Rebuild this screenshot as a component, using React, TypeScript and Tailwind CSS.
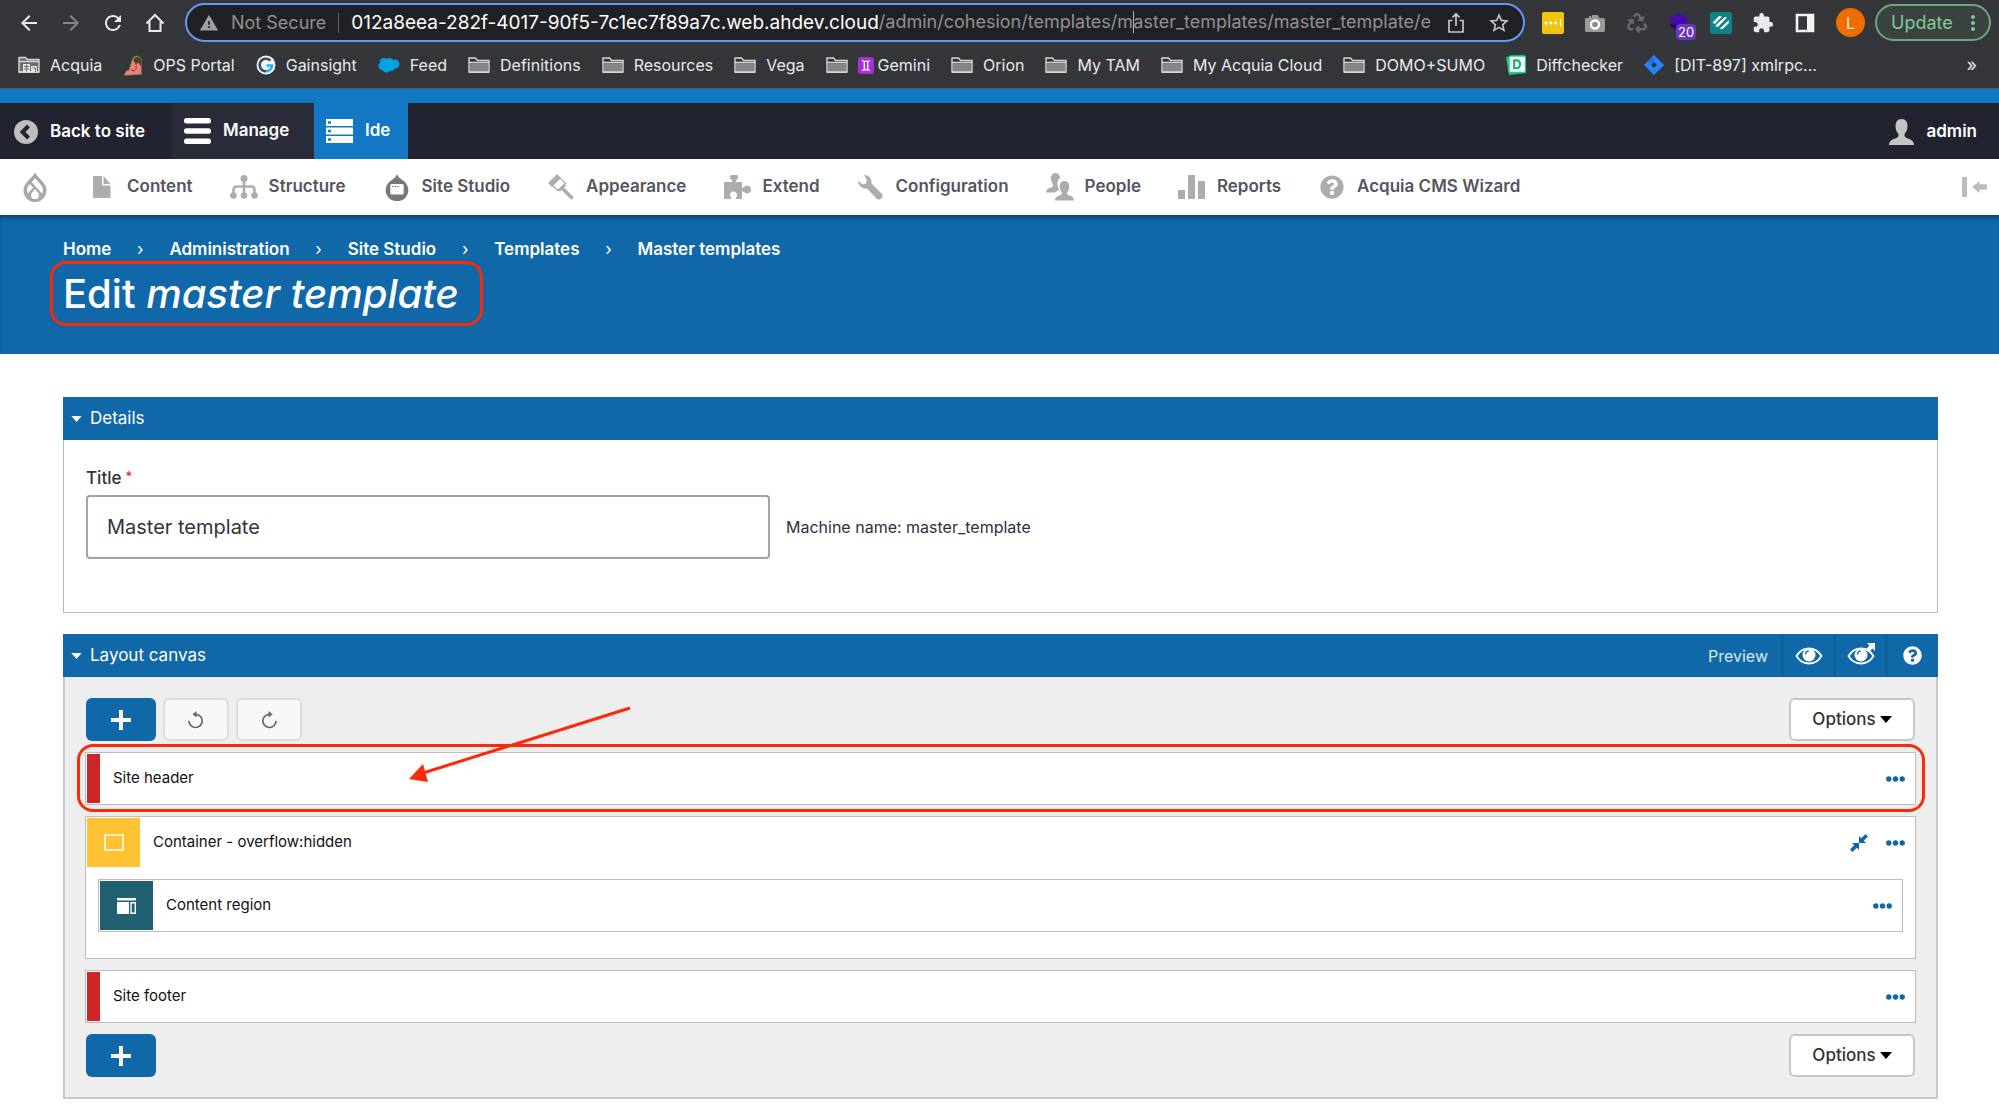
import type { ReactNode } from "react";
import { MdArrowBack, MdArrowForward, MdExtension, MdMoreVert, MdRefresh, MdStarBorder, MdWarning } from "react-icons/md";
import { FaQuestionCircle, FaRecycle } from "react-icons/fa";
import { SiDrupal } from "react-icons/si";

/* ---------- browser icons ---------- */

const HomeIcon = () => (
  <svg viewBox="0 0 20 20" className="h-5 w-5" fill="none" stroke="currentColor" strokeWidth="2">
    <path d="M1.5 10.5 10 2l8.500 8.500M4.500 8.500V18h11V8.500" />
  </svg>
);

const ShareIcon = () => (
  <svg viewBox="0 0 18 22" className="h-[22px] w-[18px] shrink-0" fill="none" stroke="currentColor" strokeWidth="1.700">
    <path d="M5.500 8.500H2v11.500h14V8.500h-3.500M9 14V2M5.500 5.300 9 1.800l3.500 3.500" />
  </svg>
);

const FolderIcon = () => (
  <svg viewBox="0 0 22 18" className="h-[18px] w-[22px] shrink-0">
    <path d="M1 16V2h6.500l2 2.500H21V16z" fill="#35363a" stroke="#d6d7d9" strokeWidth="1.400" />
    <path d="M2 7.500h18V15H2z" fill="#85868a" />
    <path d="M1 6.500h20M1 16.200h20" stroke="#d6d7d9" strokeWidth="1.600" />
  </svg>
);

const BuildingFolderIcon = () => (
  <svg viewBox="0 0 22 18" className="h-[18px] w-[22px] shrink-0">
    <path d="M1 16V1.500h6.500l2 2H21V16z" fill="#6b6c70" stroke="#d6d7d9" strokeWidth="1.400" />
    <path d="M1 5.500h20M1 16.200h20" stroke="#d6d7d9" strokeWidth="1.600" />
    <path d="M5 8h7v8H5zM13 10h6v6h-6z" fill="#e3e4e6" />
    <path d="M6 10.500h5M6 13h5M8.500 8.500v7M14.500 12h3v4" stroke="#6b6c70" fill="none" />
  </svg>
);

const OpsIcon = () => (
  <svg viewBox="0 0 20 21" className="h-[21px] w-5 shrink-0">
    <path d="M1 20.500 3 16l3-1 3-10c1-4 5-5 7.500-3 3 2 2.500 6 2 8v9.500z" fill="#f0817a" stroke="#5c6b2e" strokeWidth="1" strokeDasharray="2 1" />
    <path d="M10 5c1-3 5-4 7-2s2 6 1 8c-1 0-1-3-3-3s-1 3-2 2-1-3-3-5z" fill="#3f4a22" />
    <path d="M8 15c3 2 6 0 5-4" stroke="#7b3b34" fill="none" />
  </svg>
);

const GainsightIcon = () => (
  <svg viewBox="0 0 20 20" className="h-5 w-5 shrink-0">
    <circle cx="10" cy="10" r="9.500" fill="#f4f6f8" />
    <path d="M14.500 5.600A6.300 6.300 0 1 0 10 16.300" fill="none" stroke="#3b5165" strokeWidth="2.600" />
    <path d="M10 16.300a6 6 0 0 0 6-5.800h-5.500" fill="none" stroke="#1fb6ee" strokeWidth="2.600" />
  </svg>
);

const CloudIcon = () => (
  <svg viewBox="0 0 22 16" className="h-4 w-[22px] shrink-0" fill="#00a1e0">
    <circle cx="6" cy="5" r="4" />
    <circle cx="11.500" cy="4.800" r="3.800" />
    <circle cx="17" cy="7" r="4.500" />
    <circle cx="4.500" cy="9" r="4" />
    <circle cx="8.500" cy="11.500" r="4" />
    <circle cx="13" cy="10" r="4" />
  </svg>
);

const GeminiIcon = () => (
  <svg viewBox="0 0 16 17" className="h-[17px] w-4 shrink-0">
    <rect width="16" height="17" rx="3" fill="#a632d6" />
    <path d="M4 3.500c2.500 1.200 5.500 1.200 8 0M4 13.500c2.500-1.200 5.500-1.200 8 0M6.300 4.500v8M9.700 4.500v8" fill="none" stroke="#fff" strokeWidth="1.300" />
  </svg>
);

const DiffcheckerIcon = () => (
  <svg viewBox="0 0 20 20" className="h-5 w-5 shrink-0">
    <path d="M0 2 17 0l3 18-17 2z" fill="#14c97b" />
    <rect x="3" y="1" width="16.500" height="16.500" rx="1.500" fill="#fff" stroke="#12d483" strokeWidth="1.400" />
    <path d="M8.200 5.300h2.300c4.600 0 4.600 7.900 0 7.900H8.200z" fill="none" stroke="#12b870" strokeWidth="2.200" />
  </svg>
);

const JiraIcon = () => (
  <svg viewBox="0 0 20 20" className="h-5 w-5 shrink-0">
    <path d="M10 0 20 10 10 20 0 10z" fill="#2684ff" />
    <path d="M10 0v7L7 10l-3.500-3.500z" fill="#1f74ea" />
    <path d="M10 7l3 3-3 3-3-3z" fill="#35363a" />
  </svg>
);

const NotesExtension = () => (
  <svg viewBox="0 0 22 22" className="h-[22px] w-[22px]">
    <rect width="22" height="22" rx="2" fill="#f1c40f" />
    <g fill="#fff">
      <circle cx="4" cy="11" r="1.500" />
      <circle cx="8.800" cy="11" r="1.500" />
      <circle cx="13.600" cy="11" r="1.500" />
      <path d="M18 7.500h1.200v7H18z" />
    </g>
  </svg>
);

const CameraExtension = () => (
  <svg viewBox="0 0 22 22" className="h-[22px] w-[22px]">
    <path d="M2 6h3V4h2v2h.500L8 3h6l1 3h4.500a1.500 1.500 0 0 1 1.500 1.500v11a1.500 1.500 0 0 1-1.500 1.500h-17A1.500 1.500 0 0 1 1 18.500v-11A1.500 1.500 0 0 1 2 6z" fill="#999a9c" />
    <circle cx="11" cy="12.500" r="4" fill="#8a8b8d" stroke="#fff" strokeWidth="2.400" />
  </svg>
);

const PurpleExtension = () => (
  <svg viewBox="0 0 22 22" className="h-[22px] w-[22px]">
    <path d="M1 13l4-2 9 5-4 3z" fill="#2b0668" />
    <path d="M11 1l10.500 7L11 15 .500 8z" fill="#4a08b5" />
  </svg>
);

const TealExtension = () => (
  <svg viewBox="0 0 22 22" className="h-[22px] w-[22px]">
    <rect width="22" height="22" rx="2.500" fill="#0f8285" />
    <path d="M2.500 10.500 9 4l3 .500L5 12zM5 14l9.500-9 2.500.500L8 15zM9.500 17l9.500-9-.500 3.500-6 5.500z" fill="#fff" />
  </svg>
);

const SidePanelIcon = () => (
  <svg viewBox="0 0 20 20" className="h-5 w-5">
    <path d="M2 2h16v16H2z" fill="none" stroke="#f1f3f4" strokeWidth="2.600" />
    <path d="M12 2h6v16h-6z" fill="#f1f3f4" />
  </svg>
);

/* ---------- admin toolbar icons ---------- */

const BackIcon = () => (
  <svg viewBox="0 0 24 24" className="h-6 w-6">
    <circle cx="12" cy="12" r="12" fill="#bebebe" />
    <path d="M14.500 6 8.500 12l6 6" fill="none" stroke="#222330" strokeWidth="4" />
  </svg>
);

const BarsIcon = () => (
  <svg viewBox="0 0 27 26" className="h-[26px] w-[27px]" fill="#fff">
    <rect width="27" height="5.500" rx="2.500" />
    <rect y="10.200" width="27" height="5.500" rx="2.500" />
    <rect y="20.500" width="27" height="5.500" rx="2.500" />
  </svg>
);

const ServerIcon = () => (
  <svg viewBox="0 0 27 24" className="h-6 w-[27px]">
    <path d="M0 0h27v7H0zM0 8.500h27v7H0zM0 17h27v7H0z" fill="#fff" />
    <path d="M2 2.200h3v2.600H2zM2 10.700h3v2.600H2zM2 19.200h3v2.600H2z" fill="#1378c3" />
  </svg>
);

const UserIcon = () => (
  <svg viewBox="0 0 25 26" className="h-[26px] w-[25px]" fill="#c4c4c4">
    <path d="M12.500 0c4 0 6 2.800 6 7 0 3.500-1.200 6-2.800 7.700-.600 1.500 0 3.300 1.300 4 3 1.500 8 2 8 7.300H0c0-5.300 5-5.800 8-7.300 1.300-.700 1.900-2.500 1.300-4C7.700 13 6.500 10.500 6.500 7c0-4.200 2-7 6-7z" />
  </svg>
);

const FileIcon = () => (
  <svg viewBox="0 0 18 22" className="h-[22px] w-[18px]">
    <path d="M0 0h9v9.500h8.500V22H0zM10.500 0l7 8h-7z" />
  </svg>
);

const SitemapIcon = () => (
  <svg viewBox="0 0 28 24" className="h-6 w-7">
    <circle cx="14" cy="3.500" r="3.500" />
    <circle cx="3.500" cy="20.500" r="3.300" />
    <circle cx="14" cy="20.500" r="3.300" />
    <circle cx="24.500" cy="20.500" r="3.300" />
    <path d="M14 4v16M3.500 20v-5c0-2 1-3.500 3-3.500h15c2 0 3 1.500 3 3.500v5" fill="none" stroke="currentColor" strokeWidth="2.600" />
  </svg>
);

const StudioIcon = () => (
  <svg viewBox="0 0 24 28" className="h-7 w-6 text-[#787878]" fill="currentColor">
    <path d="M12 1c1 3 3 4.500 6 6.500a11.300 11.300 0 1 1-12 0C9 5.500 11 4 12 1z" />
    <rect x="5.300" y="11" width="13.400" height="10.500" rx="1.500" fill="#fff" />
    <path d="M7 13h1.500v1H7zM9.500 13H11v1H9.500zM12 13h1.500v1H12z" />
  </svg>
);

/* flat brush: ferrule, open bristle block, handle */
const PaintIcon = () => (
  <svg viewBox="0 0 26 26" className="h-[26px] w-[26px]">
    <path d="M9 0 0 9l4 4 9-9z" />
    <path d="M12.500 4.500 17.500 9.500 10 16.500 5 12" fill="none" stroke="currentColor" strokeWidth="1.400" />
    <path d="M14 14 23.500 23.500" stroke="currentColor" strokeWidth="3.600" strokeLinecap="round" />
    <path d="M16.500 9.500 10 16l2 1.500 6-6z" />
  </svg>
);

const PuzzleIcon = () => (
  <svg viewBox="0 0 27 24" className="h-6 w-[27px]">
    <path d="M0 7h8.500c0-2-2.500-2.500-2.500-5 0-1 .500-2 1-2h6c.500 0 1 1 1 2 0 2.500-2.500 3-2.500 5H18v6c2 0 2.500-2.500 5-2.500 2 0 4 1.500 4 4s-2 4-4 4c-2.500 0-3-2.500-5-2.500V24h-6.500c0-1.500 1.500-2 1.500-4s-1.500-3.500-3.500-3.500S6 18 6 20s1.500 2.500 1.500 4H0z" />
  </svg>
);

const WrenchIcon = () => (
  <svg viewBox="0 0 25 25" className="h-[25px] w-[25px]">
    <path d="M6 0c5 0 8 3.500 7.500 8.500L24 19c2 3-2 7-5 5L9 13.500C4 14 0 10.500 0 5.500L4.500 9.500 8 8.500 9 5z" />
  </svg>
);

const PeopleIcon = () => (
  <svg viewBox="0 0 28 28" className="h-7 w-7">
    <path d="M9.500 0c3 0 4.500 2 4.500 5-2 1.500-3 4-2.500 7 .200 2 1 3.500 1.500 4.500-1 1.500-3 2-4.500 3H0c0-3.500 3-4.500 6-5.500 1.500-.500 1-2.500.500-3.500C5.500 9 5 7.500 5 5.500 5 2 6.500 0 9.500 0z" />
    <path d="M18.500 8c3 0 4.800 2 4.800 5.200 0 2.500-.800 4.500-2 6-.500 1.300 0 2.300 1 2.800 2.500 1 5.700 1.500 5.700 5.500H9c0-4 3.200-4.500 5.700-5.500 1-.500 1.500-1.500 1-2.800-1.200-1.500-2-3.500-2-6C13.700 10 15.500 8 18.500 8z" />
  </svg>
);

const ChartIcon = () => (
  <svg viewBox="0 0 27 24" className="h-6 w-[27px]">
    <path d="M0 15h7v9H0zM10 0h7v24h-7zM20 6h7v18h-7z" />
  </svg>
);

const CollapseTrayIcon = () => (
  <svg viewBox="0 0 25 20" className="h-5 w-[25px]" fill="#bdbdbd">
    <path d="M0 0h5v20H0zM10 10l7.500-6v3.300H25v5.400h-7.500V16z" />
  </svg>
);

/* ---------- layout canvas icons ---------- */

const PlusIcon = () => (
  <svg viewBox="0 0 20 20" className="h-5 w-5" stroke="#fff" strokeWidth="4">
    <path d="M10 0v20M0 10h20" />
  </svg>
);

const UndoIcon = () => (
  <svg viewBox="0 0 16 18" className="h-[18px] w-4" fill="none" stroke="#666" strokeWidth="1.700">
    <path d="M6.500 3.300H8a6.600 6.600 0 1 1-7 6.600" />
    <path d="M8.500 0v6.500L4.500 3.300z" fill="#666" stroke="none" />
  </svg>
);

const RedoIcon = () => (
  <svg viewBox="0 0 16 18" className="h-[18px] w-4" fill="none" stroke="#666" strokeWidth="1.700">
    <path d="M9.500 3.300H8a6.600 6.600 0 1 0 7 6.600" />
    <path d="M7.500 0v6.500l4-3.200z" fill="#666" stroke="none" />
  </svg>
);

const EyeIcon = ({ external = false }: { external?: boolean }) => (
  <svg viewBox="0 0 28 26" className="h-[26px] w-7">
    <path d="M1.500 13C7.500 3 20.500 3 26.500 13c-6 10-19 10-25 0z" fill="none" stroke="#fff" strokeWidth="1.800" />
    <circle cx="14" cy="12" r="6.500" fill="#fff" />
    <path d="M10.500 11.500c0-2 1.300-3.300 3.200-3.500" fill="none" stroke="#1068a9" strokeWidth="1.300" />
    {external && (
      <>
        <path d="M19 1h8v8z" fill="#1068a9" stroke="#1068a9" strokeWidth="2" />
        <path d="M20 0h8v8l-2.500-2.500-3.500 3.500-3-3 3.500-3.500z" fill="#fff" />
      </>
    )}
  </svg>
);

const DotsIcon = () => (
  <svg viewBox="0 0 19 6" className="h-1.5 w-[19px]" fill="#1068a9">
    <circle cx="2.800" cy="3" r="2.700" />
    <circle cx="9.500" cy="3" r="2.700" />
    <circle cx="16.200" cy="3" r="2.700" />
  </svg>
);

const CompressIcon = () => (
  <svg viewBox="0 0 18 18" className="h-[18px] w-[18px]" fill="#1068a9">
    <path d="M9 2v7h7l-2.200-2.200L18 2.500 15.500 0l-4.300 4.200zM9 16V9H2l2.200 2.200L0 15.500 2.500 18l4.300-4.200z" />
  </svg>
);

const CaretDown = ({ className }: { className: string }) => (
  <svg viewBox="0 0 12 7" className={className} fill="currentColor">
    <path d="M0 0h12L6 7z" />
  </svg>
);

/* ---------- data ---------- */

const bookmarks: { label: string; icon: ReactNode }[] = [
  { label: "Acquia", icon: <BuildingFolderIcon /> },
  { label: "OPS Portal", icon: <OpsIcon /> },
  { label: "Gainsight", icon: <GainsightIcon /> },
  { label: "Feed", icon: <CloudIcon /> },
  { label: "Definitions", icon: <FolderIcon /> },
  { label: "Resources", icon: <FolderIcon /> },
  { label: "Vega", icon: <FolderIcon /> },
  { label: "Gemini", icon: <FolderIcon /> },
  { label: "Orion", icon: <FolderIcon /> },
  { label: "My TAM", icon: <FolderIcon /> },
  { label: "My Acquia Cloud", icon: <FolderIcon /> },
  { label: "DOMO+SUMO", icon: <FolderIcon /> },
  { label: "Diffchecker", icon: <DiffcheckerIcon /> },
  { label: "[DIT-897] xmlrpc...", icon: <JiraIcon /> },
];

const menu: { label: string; icon: ReactNode }[] = [
  { label: "Content", icon: <FileIcon /> },
  { label: "Structure", icon: <SitemapIcon /> },
  { label: "Site Studio", icon: <StudioIcon /> },
  { label: "Appearance", icon: <PaintIcon /> },
  { label: "Extend", icon: <PuzzleIcon /> },
  { label: "Configuration", icon: <WrenchIcon /> },
  { label: "People", icon: <PeopleIcon /> },
  { label: "Reports", icon: <ChartIcon /> },
  { label: "Acquia CMS Wizard", icon: <FaQuestionCircle className="h-6 w-6" /> },
];

const breadcrumbs = ["Home", "Administration", "Site Studio", "Templates", "Master templates"];

/* ---------- sections ---------- */

const BrowserBar = () => (
  <div className="border-b border-[#55575c] bg-[#35363a] pt-[3px] text-[#e8eaed]">
    <div className="flex h-[39px] items-center pr-2">
      <div className="flex w-[185px] shrink-0 items-center gap-[18px] pl-[17px]">
        <button aria-label="Back"><MdArrowBack className="h-6 w-6" /></button>
        <button aria-label="Forward" className="text-[#85868a]"><MdArrowForward className="h-6 w-6" /></button>
        <button aria-label="Reload"><MdRefresh className="h-6 w-6" /></button>
        <button aria-label="Home" className="pl-0.5"><HomeIcon /></button>
      </div>

      <div className="flex h-full min-w-0 flex-1 items-center rounded-full border-2 border-[#6398f5] bg-[#202124] px-3 text-lg text-[#8f9194]">
        <MdWarning className="h-5 w-5 shrink-0 text-[#9aa0a6]" />
        <span className="ml-3 shrink-0">Not Secure</span>
        <span className="mx-3 h-5 w-px shrink-0 bg-[#5f6368]" />
        <div className="flex min-w-0 flex-1 items-center whitespace-nowrap">
          <span className="text-[19px] text-white">012a8eea-282f-4017-90f5-7c1ec7f89a7c.web.ahdev.cloud</span>
          <span>/admin/cohesion/templates/m</span>
          <span className="h-[22px] w-px bg-[#b0b2b5]" />
          <span>aster_templates/master_template/e</span>
        </div>
        <button aria-label="Share" className="ml-4 text-[#c4c6c9]"><ShareIcon /></button>
        <button aria-label="Bookmark this tab" className="ml-[22px] text-[#c4c6c9]"><MdStarBorder className="h-6 w-6" /></button>
      </div>

      <div className="ml-[17px] flex items-center gap-5">
        <button aria-label="Notes"><NotesExtension /></button>
        <button aria-label="Screenshot"><CameraExtension /></button>
        <button aria-label="Recycle"><FaRecycle className="h-5 w-[22px] text-[#66686b]" /></button>
        <button aria-label="20 items" className="relative">
          <PurpleExtension />
          <span className="absolute left-2 top-3 rounded-sm bg-[#6a35c0] px-0.5 text-[13px] leading-4 text-white">20</span>
        </button>
        <button aria-label="Drafts"><TealExtension /></button>
        <button aria-label="Extensions"><MdExtension className="h-[22px] w-[22px]" /></button>
        <button aria-label="Side panel" className="flex w-[22px] justify-center"><SidePanelIcon /></button>
        <button aria-label="Profile" className="h-[29px] w-[29px] rounded-full bg-[#ef6c00] text-base">L</button>
      </div>
      <button className="ml-2.5 flex h-[37px] w-[116px] items-center justify-between rounded-full border-2 border-[#6fa580] bg-[#3b4340] pl-3.5 pr-1 text-lg text-[#81c995]">
        Update
        <MdMoreVert className="h-6 w-6" />
      </button>
    </div>

    <div className="flex h-[46px] items-center justify-between pl-[18px] pr-[22px]">
      <div className="flex items-center gap-[21px] text-base">
        {bookmarks.map((b) => (
          <a key={b.label} href="#" className="flex items-center gap-2.5 whitespace-nowrap">
            {b.icon}
            <span className="flex items-center gap-1">
              {b.label === "Gemini" && <GeminiIcon />}
              {b.label}
            </span>
          </a>
        ))}
      </div>
      <button aria-label="More bookmarks" className="text-lg">»</button>
    </div>
  </div>
);

const AdminBar = () => (
  <nav className="flex h-14 items-stretch bg-[#222330] pt-px text-[17px] font-semibold text-white">
    <a href="#" className="flex w-[172px] items-center gap-3 pl-3.5">
      <BackIcon />
      Back to site
    </a>
    <a href="#" className="-mt-px flex w-[142px] items-center gap-3 bg-[#2a2b38] pl-3">
      <BarsIcon />
      Manage
    </a>
    <a href="#" className="-mt-px flex w-[94px] items-center gap-3 bg-[#1378c3] pl-3">
      <ServerIcon />
      Ide
    </a>
    <a href="#" className="ml-auto flex items-center gap-3 pr-[22px]">
      <UserIcon />
      admin
    </a>
  </nav>
);

const MenuBar = () => (
  <nav className="flex h-14 items-center bg-white pl-5 pr-3 text-[17px] font-semibold text-[#55565f]">
    <a href="#" aria-label="Drupal" className="mr-[38px] text-[#a9a9a9]">
      <SiDrupal className="h-[34px] w-[30px]" />
    </a>
    <div className="flex items-center gap-[37px]">
      {menu.map((m) => (
        <a key={m.label} href="#" className="flex items-center gap-[11px] whitespace-nowrap">
          <span className="flex w-7 justify-center fill-[#adadad] text-[#adadad]">{m.icon}</span>
          {m.label}
        </a>
      ))}
    </div>
    <button aria-label="Collapse tray" className="ml-auto"><CollapseTrayIcon /></button>
  </nav>
);

const PageHeader = () => (
  <header className="bg-[#1068a9] px-[63px] pb-9 pt-[22px] text-white shadow-[inset_0_5px_5px_-3px_rgba(0,0,0,0.45)]">
    <nav aria-label="Breadcrumb">
      <ol className="flex items-center text-[17px] font-semibold leading-6">
        {breadcrumbs.map((crumb, i) => (
          <li key={crumb} className="flex items-center">
            {i > 0 && <span className="w-[58px] text-center font-normal">›</span>}
            <a href="#">{crumb}</a>
          </li>
        ))}
      </ol>
    </nav>
    <h1 className="relative mt-2 w-fit text-[40px] font-medium leading-[49px]">
      Edit <em>master template</em>
      <span className="absolute -bottom-2 -left-[13px] -right-6 -top-2 rounded-2xl border-[3px] border-[#fb2a0a]" />
    </h1>
  </header>
);

const Panel = ({ title, actions, children, className }: { title: string; actions?: ReactNode; children: ReactNode; className: string }) => (
  <section>
    <header className="flex h-[43px] items-stretch justify-between bg-[#1068a9] text-white">
      <button className="flex items-center gap-2 pl-2 text-[17px]">
        <CaretDown className="h-1.5 w-[11px]" />
        {title}
      </button>
      {actions}
    </header>
    <div className={className}>{children}</div>
  </section>
);

const OptionsButton = () => (
  <button className="flex h-[43px] w-[126px] items-center justify-center gap-1 rounded-md border-2 border-[#c6c6c6] bg-white text-[17px] font-medium text-[#333]">
    Options
    <CaretDown className="h-[7px] w-3 text-black" />
  </button>
);

const AddButton = () => (
  <button aria-label="Add" className="flex h-[43px] w-[70px] items-center justify-center rounded-md bg-[#1068a9]">
    <PlusIcon />
  </button>
);

const RowHeader = ({ label, tile, collapsible = false }: { label: string; tile?: ReactNode; collapsible?: boolean }) => (
  <div className="flex h-[49px] items-center pr-[9px] text-[15px] text-[#111]">
    {tile ?? <span className="h-full w-[13px] bg-[#cd2529]" />}
    <span className="ml-[13px]">{label}</span>
    <div className="ml-auto flex items-center gap-[18px]">
      {collapsible && <button aria-label="Collapse"><CompressIcon /></button>}
      <button aria-label={`${label} actions`}><DotsIcon /></button>
    </div>
  </div>
);

const PreviewActions = () => (
  <div className="flex items-stretch">
    <span className="flex items-center pr-3.5 text-base text-[#dbe8f2]">Preview</span>
    <button aria-label="Preview" className="flex w-[52px] items-center justify-center border-l border-[#0c5389]"><EyeIcon /></button>
    <button aria-label="Preview in new window" className="flex w-[52px] items-center justify-center border-l border-[#0c5389]"><EyeIcon external /></button>
    <button aria-label="Help" className="flex w-[52px] items-center justify-center border-l border-[#0c5389]"><FaQuestionCircle className="h-[19px] w-[19px]" /></button>
  </div>
);

const App = () => {
  return (
    <div className="min-h-screen bg-white font-['Inter',sans-serif] text-[#2f3040]">
      <BrowserBar />
      <div className="h-3.5 bg-[#1378c3]" />
      <AdminBar />
      <MenuBar />
      <PageHeader />

      <main className="flex flex-col gap-[21px] pb-4 pl-[63px] pr-[61px] pt-[43px]">
        <Panel title="Details" className="border border-t-0 border-[#bcbcbc] px-[22px] pb-[53px] pt-[26px]">
          <label htmlFor="title" className="mb-[5px] flex text-[17px] font-medium leading-6">
            Title<span className="ml-1 text-[13px] leading-5 text-[#e0252b]">*</span>
          </label>
          <div className="flex items-center gap-4">
            <input id="title" type="text" defaultValue="Master template" className="h-16 w-[684px] max-w-full rounded-sm border-2 border-[#a2a2a8] px-[19px] text-xl text-[#33343c]" />
            <span className="text-base">Machine name: master_template</span>
          </div>
        </Panel>

        <Panel title="Layout canvas" actions={<PreviewActions />} className="border-2 border-t-0 border-[#c9c9c9] bg-[#eee] px-5 pb-5 pt-[21px]">
          <div className="flex items-center justify-between px-px">
            <div className="flex items-center gap-[7px]">
              <AddButton />
              <button aria-label="Undo" className="flex h-[43px] w-[66px] items-center justify-center rounded-md border-2 border-[#dcdcdc] bg-[#f7f7f7]"><UndoIcon /></button>
              <button aria-label="Redo" className="flex h-[43px] w-[66px] items-center justify-center rounded-md border-2 border-[#dcdcdc] bg-[#f7f7f7]"><RedoIcon /></button>
            </div>
            <OptionsButton />
          </div>

          <div className="my-[11px] flex flex-col gap-[11px]">
            <div className="relative border border-[#bdbdbd] bg-white p-px">
              <RowHeader label="Site header" />
              <span className="pointer-events-none absolute -bottom-2 -left-[9px] -right-2.5 -top-[9px] rounded-2xl border-[3px] border-[#fb2a0a]" />
              <svg viewBox="0 0 224 78" className="pointer-events-none absolute -top-[47px] left-[323px] h-[78px] w-56">
                <path d="M221 2 14 67" stroke="#fb2a0a" strokeWidth="3" />
                <path d="M0 73 14 58l5 18z" fill="#fb2a0a" />
              </svg>
            </div>

            <div className="border border-[#bdbdbd] bg-white p-px">
              <RowHeader
                label="Container - overflow:hidden"
                collapsible
                tile={
                  <span className="flex h-full w-[53px] items-center justify-center bg-[#ffc233]">
                    <span className="h-[17px] w-5 border-2 border-[#fff1cc]" />
                  </span>
                }
              />
              <div className="mx-[11px] mb-[25px] mt-3 border border-[#bdbdbd] p-px">
                <RowHeader
                  label="Content region"
                  tile={
                    <span className="flex h-full w-[53px] items-center justify-center bg-[#206070]">
                      <svg viewBox="0 0 19 16" className="h-4 w-[19px]">
                        <path d="M0 0h19v2.500H0zM0 4h12v12H0z" fill="#fff" />
                        <path d="M14 4.700h4.300v10.600H14z" fill="none" stroke="#fff" strokeWidth="1.400" />
                      </svg>
                    </span>
                  }
                />
              </div>
            </div>

            <div className="border border-[#bdbdbd] bg-white p-px">
              <RowHeader label="Site footer" />
            </div>
          </div>

          <div className="flex items-center justify-between px-px">
            <AddButton />
            <OptionsButton />
          </div>
        </Panel>
      </main>
    </div>
  );
};

export default App;
